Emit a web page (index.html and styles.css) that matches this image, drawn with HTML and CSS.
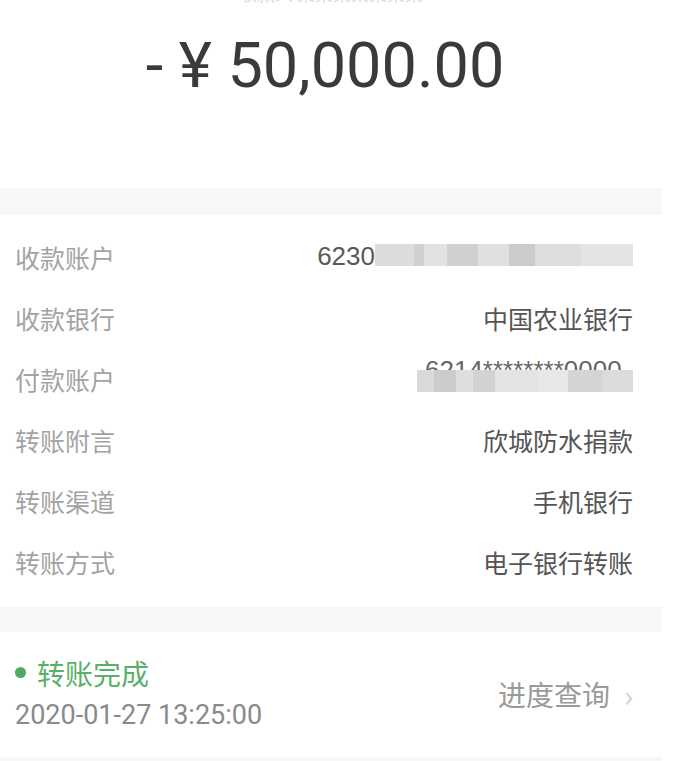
FILE: index.html
```html
<!DOCTYPE html>
<html lang="zh-CN">

<head>
    <meta charset="UTF-8">
    <meta name="viewport" content="width=device-width, initial-scale=1.0">
    <title>转账详情</title>
    <link rel="stylesheet" href="styles.css">
</head>

<body>
    <div class="page">
        <div class="head">
            <div class="payee">收款人 某某某某某某某</div>
            <div class="amount">- ¥ 50,000.00</div>
        </div>

        <div class="band"></div>

        <div class="details">
            <div class="row">
                <span class="label">收款账户</span>
                <span class="value"><span class="num">6230</span><span class="mosaic mosaic-a"></span></span>
            </div>
            <div class="row">
                <span class="label">收款银行</span>
                <span class="value">中国农业银行</span>
            </div>
            <div class="row">
                <span class="label">付款账户</span>
                <span class="value masked"><span class="num">6214********0000</span><span class="mosaic mosaic-b"></span></span>
            </div>
            <div class="row">
                <span class="label">转账附言</span>
                <span class="value">欣城防水捐款</span>
            </div>
            <div class="row">
                <span class="label">转账渠道</span>
                <span class="value">手机银行</span>
            </div>
            <div class="row">
                <span class="label">转账方式</span>
                <span class="value">电子银行转账</span>
            </div>
        </div>

        <div class="band band-small"></div>

        <div class="status">
            <div class="status-left">
                <div class="state"><span class="dot"></span>转账完成</div>
                <div class="time">2020-01-27 13:25:00</div>
            </div>
            <div class="progress">进度查询<span class="chevron">›</span></div>
        </div>

        <div class="band band-bottom"></div>
    </div>
</body>

</html>
```

FILE: styles.css
```css
body {
    margin: 0;
    background-color: #ffffff;
    font-family: "Noto Sans CJK SC", "Noto Sans", sans-serif;
}

.page {
    width: 662px;
    overflow: hidden;
}

.head {
    display: flow-root;
    height: 188px;
    text-align: center;
}

.payee {
    margin-top: -17px;
    height: 20px;
    font-size: 18px;
    line-height: 20px;
    color: #dedede;
}

.amount {
    margin-top: 26px;
    font-family: "Roboto", "Liberation Sans", sans-serif;
    font-size: 63px;
    line-height: 74px;
    color: #3a3a3a;
    padding-right: 12px;
}

.band {
    height: 27px;
    background-color: #f7f7f7;
}

.band-small {
    height: 25px;
}

.band-bottom {
    height: 30px;
}

.details {
    padding: 11px 0 15px;
}

.row {
    display: flex;
    justify-content: space-between;
    align-items: center;
    height: 61px;
    padding: 0 29px 0 15px;
    font-size: 25px;
}

.label {
    color: #a3a3a3;
}

.value {
    color: #555555;
    display: flex;
    align-items: center;
}

.num {
    font-family: "Liberation Sans", Arial, sans-serif;
    font-size: 26px;
    color: #5a5a5a;
}

.mosaic {
    display: block;
    height: 22px;
    background: linear-gradient(to right,
        #dcdcdc 0, #dcdcdc 15%, #d0d0d0 15%, #d0d0d0 19%, #e2e2e2 19%, #e2e2e2 28%,
        #cfcfcf 28%, #cfcfcf 40%, #e0e0e0 40%, #e0e0e0 52%, #cbcbcb 52%, #cbcbcb 62%,
        #dddddd 62%, #dddddd 80%, #e4e4e4 80%, #e4e4e4 100%);
}

.mosaic-a {
    width: 258px;
    margin-top: -4px;
}

.masked {
    position: relative;
    width: 216px;
    height: 40px;
    overflow: hidden;
}

.masked .num {
    position: absolute;
    left: 8px;
    top: -4px;
    color: #666666;
}

.mosaic-b {
    position: absolute;
    left: 0;
    top: 11px;
    width: 216px;
    background: linear-gradient(to right,
        #dadada 0, #dadada 8%, #cccccc 8%, #cccccc 18%, #dedede 18%, #dedede 26%,
        #d2d2d2 26%, #d2d2d2 36%, #e3e3e3 36%, #e3e3e3 56%, #e8e8e8 56%, #e8e8e8 70%,
        #d4d4d4 70%, #d4d4d4 86%, #dcdcdc 86%, #dcdcdc 100%);
}

.status {
    height: 125px;
    display: flex;
    justify-content: space-between;
    align-items: center;
    padding: 0 29px 0 15px;
}

.status-left {
    margin-top: -4px;
}

.state {
    display: flex;
    align-items: center;
    font-size: 28px;
    color: #5aaf69;
    line-height: 36px;
}

.dot {
    width: 11px;
    height: 11px;
    border-radius: 50%;
    background-color: #4faa5f;
    margin-right: 11px;
}

.time {
    margin-top: 8px;
    font-family: "Roboto", "Liberation Sans", sans-serif;
    font-size: 27px;
    line-height: 32px;
    color: #8a8a8a;
}

.progress {
    display: flex;
    align-items: center;
    font-size: 28px;
    color: #9a9a9a;
    margin-top: -2px;
}

.chevron {
    margin-left: 14px;
    font-size: 30px;
    color: #d0d0d0;
}
```
